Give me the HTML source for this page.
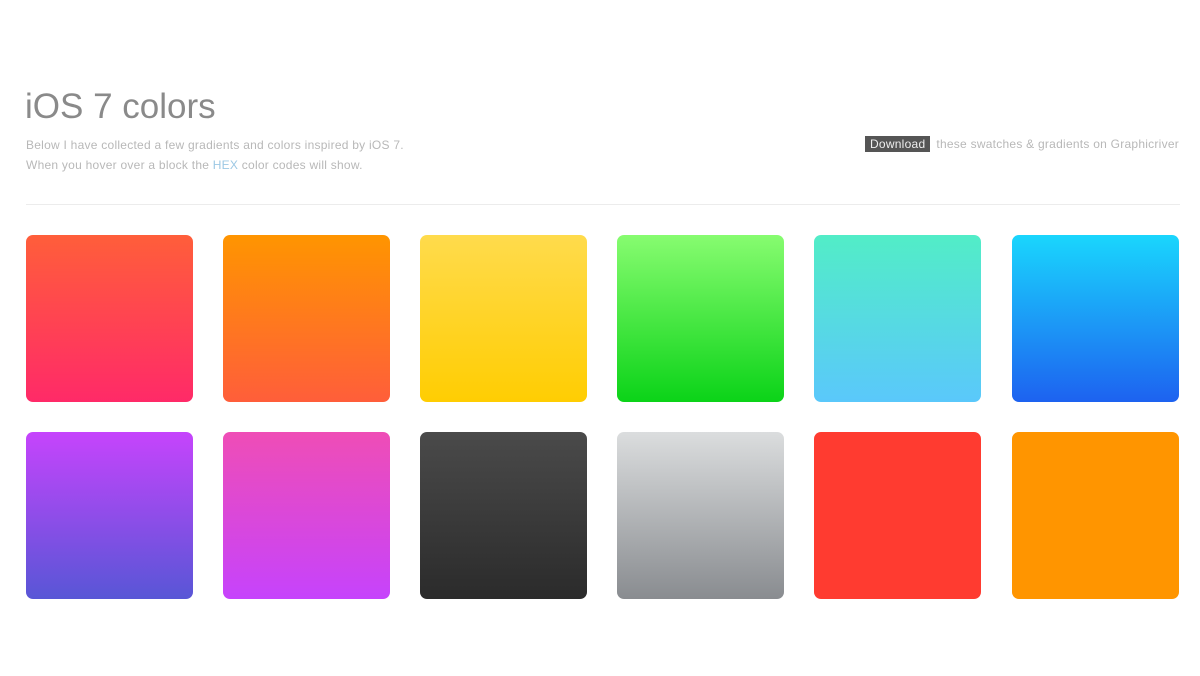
<!DOCTYPE html>
<html><head><style>
body{margin:0;width:1200px;height:676px;background:#fff;font-family:"Liberation Sans",sans-serif;position:relative;overflow:hidden}
h1{position:absolute;left:25px;top:87px;margin:0;font-size:35px;font-weight:normal;color:#8a8a8a;letter-spacing:0px}
.p{position:absolute;left:26px;font-size:12px;color:#b8b8b8;letter-spacing:0.25px}
.hr{position:absolute;left:26px;width:1154px;top:204px;height:1px;background:#ececec}
.dl{position:absolute;right:21px;top:137px;font-size:12px;color:#b8b8b8;letter-spacing:0.25px}
.dl span{background:#555;color:#eee;padding:1px 5px;margin-right:6px}
.s{position:absolute;width:167px;height:167px;border-radius:7px}
</style></head><body>
<h1>iOS 7 colors</h1>
<div class="p" style="top:138px">Below I have collected a few gradients and colors inspired by iOS 7.</div>
<div class="p" style="top:158px">When you hover over a block the <span style="color:#9cc8e4">HEX</span> color codes will show.</div>
<div class="dl"><span>Download</span>these swatches &amp; gradients on Graphicriver</div>
<div class="hr"></div>
<div class="s" style="left:26px;top:235px;background:linear-gradient(#ff5e3a,#ff2a68)"></div>
<div class="s" style="left:223px;top:235px;background:linear-gradient(#ff9500,#ff5e3a)"></div>
<div class="s" style="left:420px;top:235px;background:linear-gradient(#ffdb4c,#ffcd02)"></div>
<div class="s" style="left:617px;top:235px;background:linear-gradient(#87fc70,#0bd318)"></div>
<div class="s" style="left:814px;top:235px;background:linear-gradient(#52edc7,#5ac8fb)"></div>
<div class="s" style="left:1012px;top:235px;background:linear-gradient(#1ad6fd,#1d62f0)"></div>
<div class="s" style="left:26px;top:432px;background:linear-gradient(#c644fc,#5856d6)"></div>
<div class="s" style="left:223px;top:432px;background:linear-gradient(#ef4db6,#c643fc)"></div>
<div class="s" style="left:420px;top:432px;background:linear-gradient(#4a4a4a,#2b2b2b)"></div>
<div class="s" style="left:617px;top:432px;background:linear-gradient(#dbddde,#898c90)"></div>
<div class="s" style="left:814px;top:432px;background:#ff3b30"></div>
<div class="s" style="left:1012px;top:432px;background:#ff9500"></div>
</body></html>
